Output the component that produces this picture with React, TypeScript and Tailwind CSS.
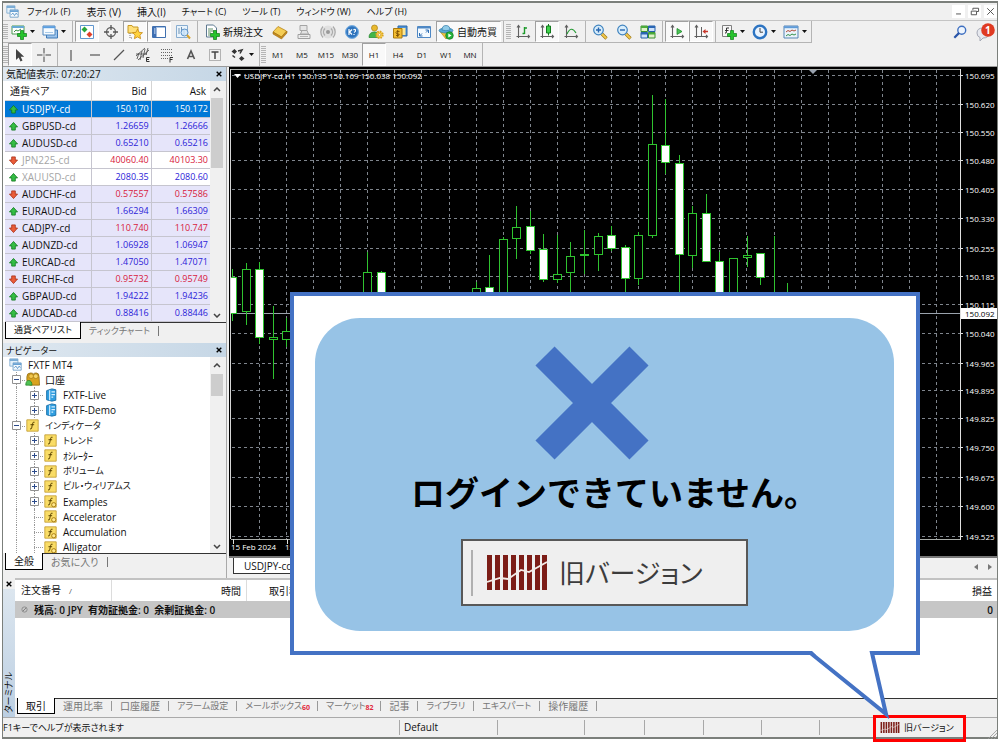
import React from "react";

type Kids = { children?: React.ReactNode };

/* ---------- icons ---------- */

const Svg = ({ children, className = "h-4 w-4" }: Kids & { className?: string }) => (
  <svg viewBox="0 0 16 16" className={className + " shrink-0"} fill="none" aria-hidden="true">
    {children}
  </svg>
);

const Caret = () => (
  <svg viewBox="0 0 5 3" className="h-[3px] w-[5px] shrink-0" aria-hidden="true">
    <path d="M0 0h5L2.500 3z" fill="#111" />
  </svg>
);

const Plus = () => (
  <path d="M9.500 6.500h3v3h3v3h-3v3h-3v-3h-3v-3h3z" fill="#25c32c" stroke="#0c7d16" strokeWidth=".7" />
);

const AppIcon = ({ className = "h-[13px] w-[13px]" }: { className?: string }) => (
  <Svg className={className}>
    <path d="M1 1h10v9H1z" fill="#e5f1fa" stroke="#7ba9cf" />
    <path d="M1 2.500h10" stroke="#69a0cf" strokeWidth="2" />
    <path d="M5 6h10v9H5z" fill="#f4f9fd" stroke="#6699c4" />
    <path d="M5 7.500h10" stroke="#5d9ad0" strokeWidth="2" />
    <path d="m6.500 12 2-2 2 3 2-3 1.500 2" stroke="#4a8ac3" />
  </Svg>
);

const NewChart = () => (
  <Svg>
    <path d="M1 2h12v8H1z" fill="#fff" stroke="#4a9a52" />
    <path d="M1 3h12" stroke="#65a9d4" strokeWidth="2" />
    <path d="m3 8 2-2 2 1 3-2" stroke="#3c8f45" />
    <Plus />
  </Svg>
);
const Profiles = () => (
  <Svg>
    <path d="M4.500 6h11v8h-11z" fill="#9cc4ec" stroke="#3f78b5" />
    <path d="M1 2h12v9H1z" fill="#f6fbff" stroke="#4f86bf" />
    <path d="M1 3.200h12" stroke="#5b9fe0" strokeWidth="2" />
    <path d="M3 8.500h8" stroke="#a7c9e8" />
  </Svg>
);
const Market = () => (
  <Svg>
    <path d="M1.500 1.500h13v13h-13z" fill="#fff" stroke="#5f96cf" />
    <path d="m5.500 2.500 3 3-3 3-3-3z" fill="#27a53a" />
    <path d="m10.500 7.500 3 3-3 3-3-3z" fill="#e0402a" />
  </Svg>
);
const Target = () => (
  <Svg>
    <circle cx="8" cy="8" r="4.500" stroke="#666" strokeWidth="1.300" />
    <path d="M8 1v5M8 10v5M1 8h5M10 8h5" stroke="#555" strokeWidth="1.300" />
  </Svg>
);
const FolderStar = () => (
  <Svg>
    <path d="M1 1.500h4l1 1.500h5v6H1z" fill="#ffe07a" stroke="#c79a24" />
    <path d="M3 9v5h3" stroke="#777" strokeDasharray="1 1" />
    <path d="m10.500 5 1.500 3.300 3.500.4-2.600 2.400.7 3.600-3.100-1.800-3.100 1.800.7-3.600L5.500 8.700 9 8.300z" fill="#ffd23d" stroke="#c98a14" strokeWidth=".8" />
  </Svg>
);
const TerminalIcon = () => (
  <Svg>
    <path d="M1.500 2.500h13v11h-13z" fill="#fff" stroke="#3f6fae" />
    <path d="M2 3h3.500v10H2z" fill="#3d6fb4" />
    <path d="M3 5h1.500M3 7h1.500M3 9h1.500" stroke="#e9f3ff" />
    <path d="M6 3.500h8" stroke="#a7c4e6" />
  </Svg>
);
const Tester = () => (
  <Svg>
    <path d="M1.500 1.500h11v12h-11z" fill="#eaf4fc" stroke="#88add0" />
    <path d="M4 4v6M6.500 3v5M9 5v6" stroke="#6f93b4" />
    <circle cx="9.500" cy="8.500" r="3.500" fill="#cfe7fa" fillOpacity=".8" stroke="#5d93c9" />
    <path d="m12 11 3 3.500" stroke="#d9a32c" strokeWidth="2" />
  </Svg>
);
const NewOrder = () => (
  <Svg>
    <path d="M2.500 1h7l3 3v9h-10z" fill="#fff" stroke="#5d7890" />
    <path d="M4 5h5M4 7h6M4 9h3M4 11h2" stroke="#5f8f68" />
    <Plus />
  </Svg>
);
const Book = () => (
  <Svg>
    <path d="M1 8 6 2.500l8.500 4.500-5 6z" fill="#f4cd55" stroke="#b98518" strokeWidth=".8" />
    <path d="M1 8v2l8.500 5 5.500-6V7l-5.500 6z" fill="#c98d1c" stroke="#9c6b10" strokeWidth=".6" />
  </Svg>
);
const Stamp = () => (
  <Svg>
    <path d="M4 1.500h7v5H4z" fill="#e6e6e6" stroke="#a5a5a5" />
    <path d="M6 6.500 4.500 10h8L11 6.500z" fill="#e3e3e3" stroke="#a5a5a5" />
    <path d="M2 10.500h12v4H2z" fill="#ececec" stroke="#a0a0a0" />
    <path d="M4 12.500h8" stroke="#b5b5b5" />
  </Svg>
);
const Signal = () => (
  <Svg>
    <circle cx="8" cy="8" r="6.500" fill="#e0e0e0" />
    <circle cx="8" cy="8" r="2" fill="#999" />
    <path d="M5 4.500a5 5 0 0 0 0 7M11 4.500a5 5 0 0 1 0 7M3 2.500a8 8 0 0 0 0 11M13 2.500a8 8 0 0 1 0 11" stroke="#aaa" strokeWidth="1.300" />
  </Svg>
);
const Help = () => (
  <Svg>
    <circle cx="8" cy="8" r="6.500" fill="#3f83c9" stroke="#79aee0" />
    <circle cx="8" cy="8" r="5.300" fill="#2f74bd" />
    <path d="M5 5v6M8 5.500 5.500 8 8 10.500M9.500 6q1.500-1.500 2 0t-1.500 2.500M10 10v1" stroke="#fff" strokeWidth="1.200" />
  </Svg>
);
const UserGear = () => (
  <Svg>
    <circle cx="6.500" cy="4" r="3" fill="#e9b92d" stroke="#a67e14" strokeWidth=".7" />
    <path d="M1 13.500q0-5.500 5.500-5.500t5.500 5.500z" fill="#43b649" stroke="#23842b" strokeWidth=".7" />
    <circle cx="11.500" cy="10.800" r="3.200" fill="#ffd34d" stroke="#d9a420" strokeDasharray="1.500 1" strokeWidth="2" />
    <circle cx="11.500" cy="10.800" r="1.200" fill="#fff" stroke="#b4861c" strokeWidth=".6" />
  </Svg>
);
const Money = () => (
  <Svg>
    <path d="M6 2h9v10H6z" fill="#4d93dc" stroke="#2f69a5" />
    <path d="M7.500 4h6v7h-6z" fill="#ffe68f" />
    <path d="M1.500 4.500h8.500v9.500H1.500z" fill="#f3bd31" stroke="#a9780d" />
    <path d="M7.500 7.500q-3.500-.8-3.500 1t3.300 1.800q0 2-3.300 1.200M5.700 6v7" stroke="#7a4c00" strokeWidth=".9" />
  </Svg>
);
const FullScreen = () => (
  <Svg>
    <path d="M1.500 2.500h13v11h-13z" fill="#f4faff" stroke="#4f88c4" />
    <path d="M2 3.500h12" stroke="#4f88c4" strokeWidth="2" />
    <path d="M9.500 6h3v3M12.500 6 10 8.500M6.500 12h-3V9M3.500 12 6 9.500" stroke="#2e6fb6" />
  </Svg>
);
const AutoTrade = () => (
  <Svg>
    <path d="M2 7.500 8 15l6-7.500z" fill="#f2c33a" stroke="#b98a1b" strokeWidth=".7" />
    <ellipse cx="8" cy="6.500" rx="7" ry="2.500" fill="#5aa9d6" stroke="#2f7aa8" strokeWidth=".7" />
    <path d="M4 6q0-4.500 4-4.500T12 6q-4 1.500-8 0z" fill="#8fcbe8" stroke="#2f7aa8" strokeWidth=".7" />
    <circle cx="11.500" cy="11.500" r="3.800" fill="#23b13a" stroke="#117a22" strokeWidth=".7" />
    <path d="m10.300 9.500 3.200 2-3.200 2z" fill="#fff" />
  </Svg>
);
const Axes = ({ children }: Kids) => (
  <Svg>
    <path d="M3.500 2v12M1.500 12.500h13M2 3.500 3.500 1.500 5 3.500M13 11l1.500 1.500L13 14" stroke="#606060" strokeWidth="1.100" />
    {children}
  </Svg>
);
const BarsChart = () => (
  <Axes>
    <path d="M9.500 3v7M7.500 9.500h2M9.500 4H12" stroke="#1d9a2b" strokeWidth="1.400" />
  </Axes>
);
const CandleChart = () => (
  <Axes>
    <path d="M9.500 0v11.500" stroke="#117a1d" />
    <path d="M7.500 2h4v7h-4z" fill="#3ed04a" stroke="#117a1d" />
  </Axes>
);
const LineChart = () => (
  <Axes>
    <path d="M4 10q4-9 9-1" stroke="#279b35" strokeWidth="1.200" />
  </Axes>
);
const Zoom = ({ plus }: { plus?: boolean }) => (
  <Svg>
    <path d="m10 10 4.500 4.500" stroke="#9b7416" strokeWidth="3.200" />
    <path d="m10 10 4.200 4.200" stroke="#f1c84a" strokeWidth="2" />
    <circle cx="6.500" cy="6" r="4.800" fill="#d8edfb" stroke="#3f83bf" strokeWidth="1.200" />
    <path d={plus ? "M4 6h5M6.500 3.500v5" : "M4 6h5"} stroke="#2766b0" strokeWidth="1.400" />
  </Svg>
);
const Tile = () => (
  <Svg>
    <path d="M1 2h6.500v5.500H1zM8.500 8.500H15V14H8.500z" fill="#dff2c8" stroke="#3a9131" />
    <path d="M8.500 2H15v5.500H8.500zM1 8.500h6.500V14H1z" fill="#cfe2fa" stroke="#2460a8" />
    <path d="M1 3h6.500M8.500 9.500H15" stroke="#4bab3b" strokeWidth="2" />
    <path d="M8.500 3H15M1 9.500h6.500" stroke="#2a66b4" strokeWidth="2" />
  </Svg>
);
const AutoScroll = () => (
  <Axes>
    <path d="m8 4.500 5 3-5 3z" fill="#4cc256" stroke="#1c8a28" strokeWidth=".8" />
  </Axes>
);
const Shift = () => (
  <Axes>
    <path d="M8.500 3v9" stroke="#606060" />
    <path d="m9.500 7.500 3-2.500v1.700H15v1.600h-2.500V10z" fill="#c8372b" />
  </Axes>
);
const Indicators = () => (
  <Svg>
    <path d="M1.500 1.500h9v11h-9z" fill="#f7f7f7" stroke="#808080" />
    <path d="M4 9q1.500 1 1.500-2V4H8M4 6.500h3.500" stroke="#333" />
    <Plus />
  </Svg>
);
const Clock = () => (
  <Svg>
    <circle cx="8" cy="8" r="6.200" fill="#eaf4ff" stroke="#2d74c2" strokeWidth="2.400" />
    <path d="M8 4v4.200h3" stroke="#444" />
  </Svg>
);
const Template = () => (
  <Svg>
    <path d="M1 2h14v12H1z" fill="#eaf3fb" stroke="#5685b5" />
    <path d="M1 3.200h14" stroke="#5f9bd8" strokeWidth="2" />
    <path d="m3 8 2-1.500 2 1 2-1.500 2 1 2-1" stroke="#b04a3a" />
    <path d="m3 12 2-1.500 2 1 2-1.500 2 1 2-1" stroke="#34904a" />
  </Svg>
);

const Pointer = () => (
  <Svg>
    <path d="M4 2v11l2.700-2.500L8.500 14.500l2-1L8.700 9.700h3.500z" fill="#444" />
  </Svg>
);
const Cross = () => (
  <Svg>
    <path d="M8 1v5.500M8 9.500V15M1 8h5.500M9.500 8H15M7.500 8h1" stroke="#444" />
  </Svg>
);
const Stroke = ({ d, className }: { d: string; className?: string }) => (
  <Svg className={className}>
    <path d={d} stroke="#555" strokeWidth="1.200" />
  </Svg>
);
const Channel = () => (
  <Svg>
    <path d="M1 9 10 1M3 13 14 3M2 12l2-6M5 13l2-9M8 11l2-9M11 8l2-7M1 7l11 0" stroke="#555" strokeWidth=".9" />
    <path d="M14.500 10.500h-3v4h3M11.500 12.500h2.500" stroke="#333" />
  </Svg>
);
const Fibo = () => (
  <Svg>
    <path d="M2 2.500h12M2 5.500h12M2 8.500h12M2 11.500h7" stroke="#666" strokeDasharray="1 1" />
    <path d="M14 10.500h-3v5M11 12.500h2.500" stroke="#333" />
  </Svg>
);
const TextA = () => (
  <Svg>
    <path d="M4.500 12 8 4l3.500 8M5.800 9.500h4.400" stroke="#555" strokeWidth="1.600" />
  </Svg>
);
const TextLabel = () => (
  <Svg>
    <path d="M2.500 2.500h11v11h-11z" stroke="#777" strokeDasharray="1 1" />
    <path d="M4.500 5h7M8 5v7" stroke="#444" strokeWidth="1.500" />
  </Svg>
);
const Arrows = () => (
  <Svg>
    <path d="m1.500 4.500 3-2.500 2.500 2.500L4.500 7zM9 11.500 11.500 9l3 2.500-3 2.500z" fill="#333" />
    <path d="M2.500 8.500 5 10.500M8 4l4-1-2 3.500" stroke="#333" strokeWidth="1.500" />
  </Svg>
);

const Direction = ({ up }: { up: boolean }) => (
  <svg viewBox="0 0 10 10" className="mx-auto h-[9px] w-[9px]" aria-hidden="true">
    {up ? (
      <path d="M5 .5 9.500 5.500H7V9H3V5.500H.5z" fill="#35bd45" stroke="#11791f" strokeWidth=".9" />
    ) : (
      <path d="M5 9.500.5 4.500H3V1h4v3.500h2.500z" fill="#ea5c3a" stroke="#a82f16" strokeWidth=".9" />
    )}
  </svg>
);

const FIcon = ({ custom }: { custom?: boolean }) => (
  <Svg className="h-[13px] w-[13px]">
    <path d="M1 1h14v14H1z" fill="#f9dc66" stroke="#c29a2c" />
    <path d="M10.500 4q-2-1-2.500 2l-1 5q-.4 1.800-2 1.200M5.500 7H10" stroke="#5a4300" strokeWidth="1.200" />
    {custom && <circle cx="12" cy="12" r="2.600" fill="#ffe88d" stroke="#a97c12" strokeWidth="1.200" />}
  </Svg>
);
const Server = () => (
  <Svg className="h-[14px] w-[14px]">
    <path d="M3 3 9 1l4.500 1v12L9 15l-6-1.500z" fill="#2f9ee0" stroke="#146ca6" />
    <path d="M6.500 2.500v11.500M8.500 4.500h4M8.500 7.500h4M8.500 10.500h2" stroke="#d9f0ff" strokeWidth="1.300" />
  </Svg>
);
const Accounts = () => (
  <Svg className="h-[15px] w-[15px]">
    <path d="M2 9V5q0-4 4-4 2 0 3 1 1-1 3-1 3 0 3 4l.500 9H5z" fill="#d9a31f" stroke="#8d6810" strokeWidth=".8" />
    <circle cx="6.500" cy="4.500" r="2.500" fill="#f2c64a" stroke="#977010" strokeWidth=".6" />
    <circle cx="11.500" cy="4.500" r="2.500" fill="#f7d566" stroke="#977010" strokeWidth=".6" />
    <path d="M.8 14q0-5 3.200-5t3.500 5z" fill="#4fc153" stroke="#25852c" strokeWidth=".8" />
  </Svg>
);

const BrandMark = ({ className }: { className: string }) => (
  <svg viewBox="0 0 60 35" className={className + " shrink-0"} aria-hidden="true">
    {[0, 8, 16, 24, 32, 40, 48, 55].map((x) => (
      <rect key={x} x={x} y="0" width="5" height="35" fill="#7c1d17" />
    ))}
    <path d="M0 27 13 23 21 24 34 15 42 17 60 7" fill="none" stroke="#f3ece8" strokeWidth="1.800" />
  </svg>
);

/* ---------- toolbar parts ---------- */

const Grip = () => <div className="my-[3px] w-[5px] shrink-0 bg-[repeating-linear-gradient(0deg,#b5b5b5_0_1px,#f0f0f0_1px_2px)]" />;
const Sep = ({ tight }: { tight?: boolean }) => <div className={"w-px shrink-0 bg-[#b4b4b4] " + (tight ? "mx-px" : "mx-[2px]")} />;

const Tool = ({ label, on, wide, children }: Kids & { label: string; on?: boolean; wide?: boolean }) => (
  <button
    type="button"
    aria-label={label}
    aria-pressed={on ? true : undefined}
    className={
      "flex shrink-0 items-center justify-center text-[8px] " +
      (wide ? "w-[31px] gap-[3px] pr-[2px] " : "w-6 ") +
      (on ? "border border-b-white border-l-[#a0a0a0] border-r-white border-t-[#a0a0a0] bg-[#f9f9f9]" : "")
    }
  >
    {children}
    {wide && <Caret />}
  </button>
);

/* ---------- data ---------- */

const menus = ["ファイル (F)", "表示 (V)", "挿入(I)", "チャート (C)", "ツール (T)", "ウィンドウ (W)", "ヘルプ (H)"];

/* Katakana labels are set one step smaller than kanji and Latin ones. */
const sizeFor = (text: string) => (/[\u30a0-\u30ff]/.test(text) ? "text-[9px]" : "text-[10px]");

type Quote = { name: string; bid: string; ask: string; up: boolean; kind?: "selected" | "muted" };
const quotes: Quote[] = [
  { name: "USDJPY-cd", bid: "150.170", ask: "150.172", up: true, kind: "selected" },
  { name: "GBPUSD-cd", bid: "1.26659", ask: "1.26666", up: true },
  { name: "AUDUSD-cd", bid: "0.65210", ask: "0.65216", up: true },
  { name: "JPN225-cd", bid: "40060.40", ask: "40103.30", up: false, kind: "muted" },
  { name: "XAUUSD-cd", bid: "2080.35", ask: "2080.60", up: true, kind: "muted" },
  { name: "AUDCHF-cd", bid: "0.57557", ask: "0.57586", up: false },
  { name: "EURAUD-cd", bid: "1.66294", ask: "1.66309", up: true },
  { name: "CADJPY-cd", bid: "110.740", ask: "110.747", up: false },
  { name: "AUDNZD-cd", bid: "1.06928", ask: "1.06947", up: true },
  { name: "EURCAD-cd", bid: "1.47050", ask: "1.47071", up: true },
  { name: "EURCHF-cd", bid: "0.95732", ask: "0.95749", up: false },
  { name: "GBPAUD-cd", bid: "1.94222", ask: "1.94236", up: true },
  { name: "AUDCAD-cd", bid: "0.88416", ask: "0.88446", up: true },
];

type Node = { text: string; level: 0 | 1 | 2; sign?: "+" | "-"; icon: React.ReactNode };
const nodes: Node[] = [
  { text: "FXTF MT4", level: 0, icon: <AppIcon /> },
  { text: "口座", level: 1, sign: "-", icon: <Accounts /> },
  { text: "FXTF-Live", level: 2, sign: "+", icon: <Server /> },
  { text: "FXTF-Demo", level: 2, sign: "+", icon: <Server /> },
  { text: "インディケータ", level: 1, sign: "-", icon: <FIcon /> },
  { text: "トレンド", level: 2, sign: "+", icon: <FIcon /> },
  { text: "ｵｼﾚｰﾀｰ", level: 2, sign: "+", icon: <FIcon /> },
  { text: "ボリューム", level: 2, sign: "+", icon: <FIcon /> },
  { text: "ビル・ウィリアムス", level: 2, sign: "+", icon: <FIcon /> },
  { text: "Examples", level: 2, sign: "+", icon: <FIcon custom /> },
  { text: "Accelerator", level: 2, icon: <FIcon custom /> },
  { text: "Accumulation", level: 2, icon: <FIcon custom /> },
  { text: "Alligator", level: 2, icon: <FIcon custom /> },
];

/* x, wick top, wick bottom, body top, body bottom, filled */
type Candle = [number, number, number, number, number, boolean];
const candles: Candle[] = [
  [232, 269, 321, 277, 313, true],
  [246, 263, 325, 269, 311, false],
  [259, 262, 344, 269, 337, true],
  [273, 306, 379, 337, 339, false],
  [286, 318, 347, 331, 339, false],
  [367, 252, 340, 272, 330, false],
  [381, 271, 340, 272, 330, true],
  [476, 282, 340, 288, 330, false],
  [489, 255, 340, 287, 330, true],
  [503, 237, 340, 239, 330, false],
  [516, 206, 259, 227, 238, false],
  [530, 211, 254, 226, 250, true],
  [543, 234, 282, 249, 279, true],
  [557, 235, 283, 274, 279, false],
  [570, 242, 300, 256, 272, false],
  [584, 230, 274, 254, 255, false],
  [598, 233, 271, 236, 254, false],
  [611, 226, 251, 235, 248, true],
  [625, 245, 300, 247, 278, true],
  [638, 232, 285, 235, 278, false],
  [652, 95, 238, 144, 235, false],
  [665, 99, 174, 145, 162, true],
  [679, 155, 300, 163, 254, true],
  [692, 206, 268, 213, 255, false],
  [706, 194, 262, 213, 261, true],
  [719, 252, 320, 261, 310, true],
  [733, 258, 320, 258, 310, false],
  [747, 236, 267, 255, 257, false],
  [760, 253, 285, 253, 277, true],
  [774, 236, 320, 300, 310, true],
  [787, 283, 320, 300, 310, true],
];

const levels: [number, string][] = [
  [76, "150.695"], [105, "150.620"], [133, "150.550"], [161, "150.480"], [190, "150.405"], [219, "150.330"],
  [249, "150.255"], [277, "150.185"], [305, "150.115"], [334, "150.040"], [364, "149.965"], [391, "149.895"],
  [419, "149.825"], [448, "149.750"], [478, "149.675"], [507, "149.600"], [537, "149.525"],
];
const columns = Array.from({ length: 26 }, (_, i) => Math.round(259 + i * 27.08));

/* ---------- panels ---------- */

const PanelTitle = ({ children }: Kids) => (
  <div className="flex h-[14px] items-center justify-between bg-linear-to-r from-[#dfe8f0] to-[#c6d7e6] pl-[3px] pr-1">
    <h2 className="whitespace-nowrap">{children}</h2>
    <button type="button" aria-label="閉じる" className="text-black">
      <svg viewBox="0 0 6 6" className="h-[6px] w-[6px]"><path d="m.7.7 4.600 4.600M5.300.7.7 5.300" stroke="currentColor" strokeWidth="1.400" /></svg>
    </button>
  </div>
);

const ScrollBar = ({ thumb }: { thumb: string }) => (
  <div className="flex w-[14px] shrink-0 flex-col items-center bg-[#f0f0f0]">
    <svg viewBox="0 0 8 5" className="my-[6px] h-[5px] w-[8px]" fill="none"><path d="m1 4 3-3 3 3" stroke="#444" strokeWidth="1.500" /></svg>
    <div className={"w-3 bg-[#cdcdcd] " + thumb} />
    <svg viewBox="0 0 8 5" className="mb-1 mt-auto h-[5px] w-[8px]" fill="none"><path d="m1 1 3 3 3-3" stroke="#444" strokeWidth="1.500" /></svg>
  </div>
);

const PanelTabs = ({ active, other, width }: { active: string; other: string; width: string }) => (
  <div className="flex h-[17px] shrink-0 pl-[2px]">
    <button type="button" className={"border-x border-b border-black bg-white " + width + " " + sizeFor(active)}>{active}</button>
    <div className="flex flex-1 items-center border-t border-[#333] pl-2 text-[#777]">
      <button type="button" className={"pr-2 " + sizeFor(other)}>{other}</button>
      <span className="h-[10px] w-px bg-[#777]" />
    </div>
  </div>
);

const MarketWatch = () => (
  <section className="flex flex-col bg-[#f0f0f0]">
    <PanelTitle>気配値表示: 07:20:27</PanelTitle>
    <div className="mr-[2px] flex bg-white pl-[2px]">
      <table className="flex-1 table-fixed border-separate border-spacing-0">
        <thead>
          <tr className="h-5">
            <th scope="col" className="w-[87px] border-b border-r border-[#d4d4d4] p-0 pl-[5px] text-left font-normal">通貨ペア</th>
            <th scope="col" className="border-b border-r border-[#d4d4d4] p-0 pr-1 text-right font-normal">Bid</th>
            <th scope="col" className="border-b border-[#d4d4d4] p-0 pr-1 text-right font-normal">Ask</th>
          </tr>
        </thead>
        <tbody>
          {quotes.map((q) => {
            const sel = q.kind === "selected";
            const price = sel ? "text-white" : q.up ? "text-[#2b22d8]" : "text-[#d8203c]";
            return (
              <tr key={q.name} className={"h-[17px] " + (sel ? "bg-[#0078d7]" : q.kind === "muted" ? "bg-white" : "bg-[#e6e5fa]")}>
                <td className={"border-b border-r border-[#c6c5cf] p-0 " + (sel ? "text-white" : q.kind === "muted" ? "text-[#a5a5a5]" : "text-[#111]")}>
                  <span className="flex items-center">
                    <span className="w-[17px]"><Direction up={q.up} /></span>
                    {q.name}
                  </span>
                </td>
                <td className={"border-b border-r border-[#c6c5cf] p-0 pr-[2px] text-right text-[9px] " + price}>{q.bid}</td>
                <td className={"border-b border-[#c6c5cf] p-0 pr-[2px] text-right text-[9px] " + price}>{q.ask}</td>
              </tr>
            );
          })}
        </tbody>
      </table>
      <ScrollBar thumb="h-[70px]" />
    </div>
    <PanelTabs active="通貨ペアリスト" other="ティックチャート" width="w-[76px]" />
  </section>
);

const Guide = ({ sign, link }: { sign?: "+" | "-"; link?: boolean }) => (
  <span className="relative flex h-full w-[18px] items-center justify-center">
    <span className="absolute inset-y-0 left-[9px] border-l border-dotted border-[#999]" />
    {link && <span className="absolute left-[9px] right-0 top-1/2 border-t border-dotted border-[#999]" />}
    {sign && (
      <svg viewBox="0 0 9 9" className="relative h-[9px] w-[9px]" fill="none">
        <path d="M.5.5h8v8h-8z" fill="#fff" stroke="#919191" />
        <path d={sign === "+" ? "M2 4.500h5M4.500 2v5" : "M2 4.500h5"} stroke="#2b4a8b" />
      </svg>
    )}
  </span>
);

const Navigator = () => (
  <section className="flex flex-col bg-[#f0f0f0]">
    <PanelTitle><span className={sizeFor("ナビゲーター")}>ナビゲーター</span></PanelTitle>
    <div className="mr-[2px] flex h-[196px] overflow-hidden bg-white pl-[2px]">
      <ul className="grid h-[198px] flex-1 auto-rows-fr pl-[2px]">
        {nodes.map((n) => (
          <li key={n.text} className={"flex min-h-0 items-center whitespace-nowrap " + sizeFor(n.text)}>
            {n.level === 0 && <span className="w-px" />}
            {n.level === 1 && <Guide sign={n.sign} link />}
            {n.level === 2 && <Guide />}
            {n.level === 2 && <Guide sign={n.sign} link />}
            <span className="mr-[5px] flex w-[15px] justify-center">{n.icon}</span>
            {n.text}
          </li>
        ))}
      </ul>
      <ScrollBar thumb="h-[22px]" />
    </div>
    <PanelTabs active="全般" other="お気に入り" width="w-[38px]" />
  </section>
);

const PriceChart = () => (
  <svg className="min-h-0 w-full flex-1 bg-black" role="img" aria-label="USDJPY-cd,H1" fontFamily="'Open Sans','Noto Sans',sans-serif" fontSize="8">
    <g transform="translate(-229 -67)" shapeRendering="crispEdges">
      <path d="M230.500 539V69.500H960.500V539.500H231" fill="none" stroke="#a9ada9" />
      <g stroke="#7f858d" strokeDasharray="3 3">
        {levels.map(([y]) => <path key={y} d={`M232 ${y - 0.5}H960`} />)}
        {columns.map((x) => <path key={x} d={`M${x + 0.5} 70V539`} />)}
      </g>
      <path d="M231 313.500H960" stroke="#9aa3ad" />
      {candles.map(([x, t, b, top, bottom, filled]) => (
        <g key={x} stroke="#2fc32f">
          <path d={`M${x + 0.5} ${t}V${b}`} />
          <rect x={x - 3.5} y={top + 0.5} width="8" height={bottom - top} fill={filled ? "#fff" : "#000"} />
        </g>
      ))}
      <path d="M229 67h1.500v480H229z" fill="#000" />
      <path d="M230.500 69v470" stroke="#d5d5d5" />
      <path d="M960.500 69v471" stroke="#e0e0e0" />
      {levels.map(([y]) => <path key={y} d={`M960 ${y - 0.5}h3`} stroke="#ddd" />)}
      <path d="M233.500 539v5M287.500 539v5" stroke="#ddd" />
    </g>
    <g transform="translate(-229 -67)" fill="#fff">
      <path d="M234 74h7l-3.500 4z" />
      <path d="M809 70h8l-4 4z" fill="#9aa3b0" />
      <text x="244" y="79">USDJPY-cd,H1  150.135 150.169 150.038 150.092</text>
      {levels.map(([y, v]) => <text key={v} x="965" y={y + 3}>{v}</text>)}
      <text x="231" y="550">15 Feb 2024</text>
      <text x="285" y="550">15 Feb 14:00</text>
      <path d="M961 308h36v11h-36z" />
      <text x="965" y="317" fill="#000">150.092</text>
    </g>
  </svg>
);

const terminalTabs: [string, string?][] = [
  ["運用比率"], ["口座履歴"], ["アラーム設定"], ["メールボックス", "60"], ["マーケット", "82"], ["記事"], ["ライブラリ"], ["エキスパート"], ["操作履歴"],
];

const Terminal = () => (
  <section className="flex h-[140px] shrink-0 border-b border-[#aaa]">
    <div className="flex w-3 shrink-0 flex-col items-center justify-between bg-linear-to-b from-[#dfe8f0] to-[#bccfe2]">
      <button type="button" aria-label="閉じる" className="flex h-[11px] w-full items-center justify-center bg-[#f0f0f0]">
        <svg viewBox="0 0 6 6" className="h-[6px] w-[6px]"><path d="m.7.7 4.600 4.600M5.300.7.7 5.300" stroke="#000" strokeWidth="1.400" /></svg>
      </button>
      <h2 className="mb-1 rotate-180 whitespace-nowrap text-[9px] leading-3 [text-orientation:sideways] [writing-mode:vertical-rl]">ターミナル</h2>
    </div>
    <div className="flex min-w-0 flex-1 flex-col border-t-2 border-[#c2c2c2] bg-white">
      <table className="w-full table-fixed border-separate border-spacing-0">
        <thead>
          <tr className="h-[21px]">
            <th scope="col" className="w-[97px] border-r border-[#dcdcdc] p-0 pl-[6px] text-left font-normal">注文番号<span className="pl-2 text-[8px] text-[#555]">/</span></th>
            <th scope="col" className="w-[135px] border-r border-[#dcdcdc] p-0 pr-[5px] text-right font-normal">時間</th>
            <th scope="col" className="w-[120px] p-0 pl-[22px] text-left font-normal">取引種別</th>
            <th scope="col" className="p-0 pr-[5px] text-right font-normal">損益</th>
          </tr>
        </thead>
        <tbody>
          <tr className="h-[17px] bg-[#c6c6c6] font-semibold">
            <td colSpan={3} className="whitespace-pre p-0">
              <span className="flex items-center gap-[6px] pl-[6px]">
                <svg viewBox="0 0 8 8" className="h-[7px] w-[7px]" fill="none"><path d="M2 6 6 2" stroke="#777" /><circle cx="4" cy="4" r="3" stroke="#888" /></svg>
                残高: 0 JPY  有効証拠金: 0  余剰証拠金: 0
              </span>
            </td>
            <td className="p-0 pr-1 text-right">0</td>
          </tr>
        </tbody>
      </table>
      <div className="flex-1" />
      <div className="flex h-[19px] shrink-0 bg-[#f0f0f0] pl-[2px]">
        <button type="button" className="mb-[3px] w-[38px] border-x border-b border-black bg-white">取引</button>
        <div className="flex flex-1 items-start border-t border-[#333] text-[#777]">
          {terminalTabs.map(([t, n]) => (
            <button type="button" key={t} className={"flex h-[13px] items-center whitespace-nowrap pl-[8px] " + sizeFor(t)}>
              {t}
              {n && <span className="self-end text-[7px] font-bold leading-[8px] text-[#e0283c]">{n}</span>}
              <span className={"h-[10px] w-px bg-[#999] " + (n ? "ml-[7px]" : "ml-[8px]")} />
            </button>
          ))}
        </div>
      </div>
    </div>
  </section>
);

const StatusBar = () => (
  <footer className="flex h-[19px] shrink-0 items-center">
    <div className="w-[396px] text-[9px]">F1キーでヘルプが表示されます</div>
    <div className="h-[15px] w-[98px] border-l border-[#a8a8a8] pl-1 leading-[15px]">Default</div>
    <div className="h-[15px] w-[87px] border-l border-[#a8a8a8]" />
    <div className="h-[15px] w-[60px] border-l border-[#a8a8a8]" />
    <div className="h-[15px] w-[59px] border-l border-[#a8a8a8]" />
    <div className="h-[15px] w-[58px] border-l border-[#a8a8a8]" />
    <div className="h-[15px] w-[58px] border-l border-[#a8a8a8]" />
    <div className="h-[15px] flex-1 border-l border-[#a8a8a8]" />
    <div className="relative mr-[10px] flex w-[110px] items-center gap-1 pl-[3px] text-[9px]">
      <span className="absolute -bottom-[7px] -left-1 -top-[6px] w-[93px] border-3 border-[#ff0000]" />
      <BrandMark className="h-[11px] w-[20px]" />
      旧バージョン
      <svg viewBox="0 0 9 9" className="absolute -bottom-1 -right-[10px] h-[9px] w-[9px]"><path d="M0 9 9 0M3 9l6-6M6 9l3-3" stroke="#999" strokeWidth=".8" /></svg>
    </div>
  </footer>
);

const Callout = () => (
  <aside className="absolute left-[290px] top-[292px] w-[630px] border-4 border-[#4472c4] bg-white px-[21px] pb-[20px] pt-[22px]">
    <div className="mr-px flex h-[313px] flex-col items-center rounded-[45px] bg-[#97c3e6] pt-[28px] text-black">
      <svg viewBox="0 0 114 114" className="mr-[25px] h-[114px] w-[114px]" fill="none" aria-hidden="true">
        <path d="m10 10 94 94M104 10l-94 94" stroke="#4472c4" strokeWidth="27" />
      </svg>
      <p className="mt-[11px] whitespace-nowrap pl-[20px] text-[34px] font-bold leading-[44px] [font-feature-settings:normal]">ログインできていません。</p>
      <div className="ml-[146px] mt-[24px] flex h-[67px] w-[287px] items-center self-start border-2 border-[#585858] bg-[#efefef] pl-2">
        <span className="mr-[14px] h-[46px] w-[2px] bg-[#b0b0b0]" />
        <BrandMark className="mr-[12px] h-[35px] w-[60px]" />
        <span className="whitespace-nowrap text-[26px] leading-[40px] text-[#3c3c3c]">旧バージョン</span>
      </div>
    </div>
    <svg viewBox="0 0 86 68" className="absolute left-[514px] top-full h-[68px] w-[86px]" fill="none" aria-hidden="true">
      <path d="M4 0H63L78 62 8 4z" fill="#fff" />
      <path d="M0 2H2.500L78 63 64 2H70" stroke="#4472c4" strokeWidth="4" />
    </svg>
  </aside>
);

export default function App() {
  return (
    <div className="relative flex h-screen min-h-[744px] flex-col overflow-hidden bg-white pb-[5px] pl-[2px] pr-[2px] pt-px font-['Open_Sans','Noto_Sans_CJK_JP',sans-serif] text-[10px] leading-[14px] text-[#111] [font-feature-settings:'palt']">
      <div className="flex min-h-0 flex-1 flex-col border-x border-b-2 border-t-2 border-[#7b7f7b] bg-[#f0f0f0]">
        <header className="flex h-[17px] shrink-0 items-center justify-between pl-[3px]">
          <nav className="flex items-center gap-4">
            <AppIcon className="-mr-2 h-[13px] w-[13px]" />
            {menus.map((m) => <button type="button" key={m} className={"whitespace-nowrap " + sizeFor(m)}>{m}</button>)}
          </nav>
          <div className="flex gap-[3px]">
            <button type="button" aria-label="最小化" className="bg-white"><Stroke className="h-[13px] w-[13px]" d="M5 11h6" /></button>
            <button type="button" aria-label="元に戻す" className="bg-white"><Stroke className="h-[13px] w-[13px]" d="M6 6V4h7v4h-2M4 7.500h6.500V12H4z" /></button>
            <button type="button" aria-label="閉じる" className="bg-white"><Stroke className="h-[13px] w-[13px]" d="m4 4 8 8M12 4l-8 8" /></button>
          </div>
        </header>

        <div className="flex h-[23px] shrink-0 justify-between border-t border-[#c4c4c4]">
          <div className="flex border-b border-r border-[#b4b4b4]">
            <Grip />
            <Tool wide label="新規チャート"><NewChart /></Tool>
            <Tool wide label="チャート組表示"><Profiles /></Tool>
            <Sep />
            <Tool on label="気配値表示"><Market /></Tool>
            <Tool label="データウィンドウ"><Target /></Tool>
            <Tool on label="ナビゲーター"><FolderStar /></Tool>
            <Tool on label="ターミナル"><TerminalIcon /></Tool>
            <Tool label="ストラテジーテスター"><Tester /></Tool>
            <Sep />
            <button type="button" className="flex w-[68px] items-center gap-[3px] whitespace-nowrap pl-1"><NewOrder />新規注文</button>
            <Tool label="MetaEditor"><Book /></Tool>
            <Tool label="VPS"><Stamp /></Tool>
            <Tool label="シグナル"><Signal /></Tool>
            <Tool label="ヘルプ"><Help /></Tool>
            <Tool label="アカウント"><UserGear /></Tool>
            <Tool label="マーケット"><Money /></Tool>
            <Tool label="全画面表示"><FullScreen /></Tool>
            <button type="button" aria-pressed="true" className="flex w-[65px] items-center gap-[3px] whitespace-nowrap border border-b-white border-l-[#a0a0a0] border-r-white border-t-[#a0a0a0] bg-[#f9f9f9] pl-[1px]"><AutoTrade />自動売買</button>
            <Sep />
            <Grip />
            <Tool label="バーチャート"><BarsChart /></Tool>
            <Tool on label="ローソク足"><CandleChart /></Tool>
            <Tool label="ラインチャート"><LineChart /></Tool>
            <Sep />
            <Tool label="拡大"><Zoom plus /></Tool>
            <Tool label="縮小"><Zoom /></Tool>
            <Tool label="整列"><Tile /></Tool>
            <Sep />
            <Tool on label="自動スクロール"><AutoScroll /></Tool>
            <Tool on label="チャートシフト"><Shift /></Tool>
            <Sep />
            <Tool wide label="インディケータ"><Indicators /></Tool>
            <Tool wide label="時間足設定"><Clock /></Tool>
            <Tool wide label="定型チャート"><Template /></Tool>
          </div>
          <div className="flex items-center gap-2 pr-[2px]">
            <button type="button" aria-label="検索">
              <Svg className="h-[14px] w-[14px]"><circle cx="10" cy="6" r="4.500" fill="#eef5fd" stroke="#3e6fc0" strokeWidth="1.600" /><path d="M7 9 1.500 14.500" stroke="#2a55a8" strokeWidth="2.500" /></Svg>
            </button>
            <button type="button" aria-label="通知" className="relative h-5 w-5">
              <svg viewBox="0 0 20 20" className="h-5 w-5" fill="none"><path d="M2 11q0-5 6-5t6 5-6 5l-3 3v-3.500q-3-1-3-4.500z" fill="#e7e9ef" stroke="#a5a9b5" /><circle cx="13" cy="8" r="6.800" fill="#df3a22" /></svg>
              <span className="absolute left-[10px] top-[1px] text-[10px] font-bold text-white">1</span>
            </button>
          </div>
        </div>

        <div className="flex h-6 shrink-0 border-b border-[#9a9a9a]">
          <div className="flex border-r border-[#b4b4b4]">
            <Grip />
            <Tool on label="カーソル"><Pointer /></Tool>
            <Tool label="クロスヘア"><Cross /></Tool>
            <Sep tight />
            <Tool label="垂直線"><Stroke d="M8 3v11" /></Tool>
            <Tool label="水平線"><Stroke d="M3 8h10" /></Tool>
            <Tool label="トレンドライン"><Stroke d="M3 13 13 3" /></Tool>
            <Tool label="チャネル"><Channel /></Tool>
            <Tool label="フィボナッチ"><Fibo /></Tool>
            <Tool label="テキスト"><TextA /></Tool>
            <Tool label="テキストラベル"><TextLabel /></Tool>
            <Tool wide label="矢印"><Arrows /></Tool>
            <Sep tight />
            <Grip />
            {["M1", "M5", "M15", "M30", "H1", "H4", "D1", "W1", "MN"].map((p) => (
              <Tool key={p} label={p} on={p === "H1"}>{p}</Tool>
            ))}
          </div>
        </div>

        <main className="flex min-h-0 flex-1">
          <div className="flex w-[224px] shrink-0 flex-col gap-1 border-r border-[#a9a9a9]">
            <MarketWatch />
            <Navigator />
          </div>
          <div className="flex min-w-0 flex-1 flex-col pb-[2px] pl-[2px]">
            <PriceChart />
            <div className="flex h-[20px] shrink-0 justify-between border-t-2 border-[#777] pl-1">
              <button type="button" className="mb-[2px] w-[86px] border border-t-0 border-[#333] bg-white">USDJPY-cd,H1</button>
              <div className="flex items-center gap-[10px] pr-[5px] text-[#777]">
                <svg viewBox="0 0 4 6" className="h-[6px] w-1"><path d="M4 0v6L0 3z" fill="currentColor" /></svg>
                <svg viewBox="0 0 4 6" className="h-[6px] w-1"><path d="M0 0v6l4-3z" fill="currentColor" /></svg>
              </div>
            </div>
          </div>
        </main>

        <Terminal />
        <StatusBar />
      </div>
      <Callout />
    </div>
  );
}
